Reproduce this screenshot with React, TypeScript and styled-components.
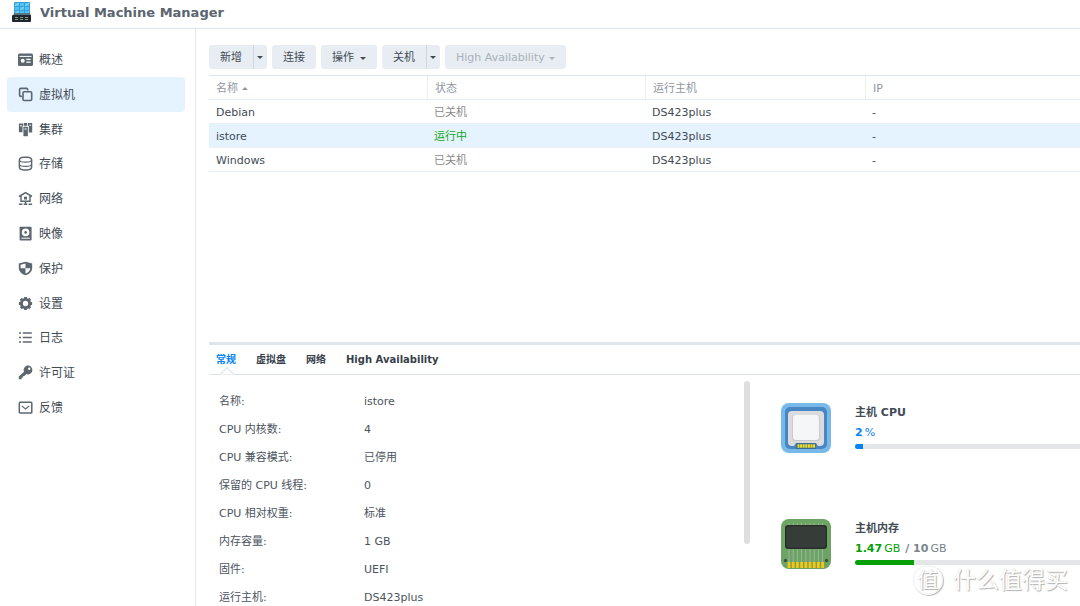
import React from "react";
import styled, { createGlobalStyle, css } from "styled-components";

const sans = `"DejaVu Sans", "Noto Sans CJK SC", sans-serif`;

const GlobalStyle = createGlobalStyle`
  * { box-sizing: border-box; }
  html, body, #root { height: 100%; }
  body {
    margin: 0;
    overflow: hidden;
    background: #fff;
    color: #4b545e;
    font: 11px/16px ${sans};
  }
  button { font: inherit; color: inherit; }
`;

const Window = styled.div`
  position: relative;
  display: flex;
  flex-direction: column;
  height: 100vh;
  overflow: hidden;
`;

const TitleBar = styled.header`
  display: flex;
  align-items: center;
  gap: 8px;
  height: 29px;
  flex: none;
  padding: 0 12px 4px;
  border-bottom: 1px solid #e1e6ec;
`;

const Title = styled.h1`
  margin: 0;
  padding-top: 2px;
  font-size: 13px;
  line-height: 20px;
  font-weight: 700;
  color: #5b656f;
`;

const Body = styled.div`
  display: flex;
  flex: 1;
  min-height: 0;
`;

const Sidebar = styled.nav`
  flex: none;
  width: 196px;
  padding: 13px 10px 0 7px;
  border-right: 1px solid #e4e9ef;
`;

const NavList = styled.ul`
  display: grid;
  grid-auto-rows: 1fr;
  height: 383px;
  margin: 0;
  padding: 0;
  list-style: none;
`;

const NavLink = styled.a<{ $active?: boolean }>`
  display: flex;
  align-items: center;
  gap: 6px;
  height: 100%;
  padding: 0 11px;
  border-radius: 4px;
  font-size: 12px;
  color: #414b55;
  text-decoration: none;
  background: ${(p) => (p.$active ? "#e5f2ff" : "transparent")};
`;

const NavIcon = styled.svg`
  width: 15px;
  height: 15px;
  flex: none;
  color: #5d6770;
`;

const NavLabel = styled.span`
  padding-top: 1px;
`;

const Main = styled.main`
  display: flex;
  flex-direction: column;
  flex: 1;
  min-width: 0;
  padding-left: 13px;
`;

const Upper = styled.section`
  flex: 1;
  min-height: 0;
`;

const Toolbar = styled.div`
  display: flex;
  gap: 5px;
  padding: 16px 0 6px;
`;

const SplitButton = styled.div`
  display: flex;
`;

const Button = styled.button<{ $part?: "start" | "end" }>`
  display: flex;
  align-items: center;
  gap: 6px;
  height: 24px;
  padding: 2px 11px 0;
  border: 0;
  border-radius: 3px;
  background: #e8edf3;
  color: #414b55;
  &:disabled {
    gap: 4px;
    color: #a9b1ba;
  }
  ${(p) =>
    p.$part === "start" &&
    css`
      border-radius: 3px 0 0 3px;
    `}
  ${(p) =>
    p.$part === "end" &&
    css`
      padding: 0 4px 0 3px;
      border-left: 1px solid #cdd5de;
      border-radius: 0 3px 3px 0;
    `}
`;

const Caret = styled.span<{ $up?: boolean }>`
  display: inline-block;
  border: 3px solid transparent;
  border-top: ${(p) => (p.$up ? "0" : "3px solid currentColor")};
  border-bottom: ${(p) => (p.$up ? "3px solid currentColor" : "0")};
  vertical-align: middle;
`;

const Table = styled.table`
  width: 100%;
  table-layout: fixed;
  border-collapse: separate;
  border-spacing: 0;
  border-top: 1px solid #dde5ed;
`;

const Col = styled.col<{ $width?: number }>`
  width: ${(p) => (p.$width ? `${p.$width}px` : "auto")};
`;

const HeadCell = styled.th`
  height: 24px;
  padding: 2px 7px 0;
  border-bottom: 1px solid #e8edf2;
  text-align: left;
  font-weight: 400;
  color: #8f979f;
  & + & {
    border-left: 1px solid #e8f0f5;
  }
`;

const Row = styled.tr<{ $selected?: boolean }>`
  background: ${(p) => (p.$selected ? "#e5f2ff" : "transparent")};
`;

const Cell = styled.td<{ $tone?: "muted" | "running" }>`
  height: 24px;
  padding: 2px 7px 0;
  border-bottom: 1px solid #ebf0f5;
  color: ${(p) => (p.$tone === "running" ? "#14a821" : p.$tone === "muted" ? "#8a8a8a" : "#414b55")};
`;

const Details = styled.section`
  display: flex;
  flex-direction: column;
  flex: none;
  height: 264px;
  border-top: 3px solid #dfe6ed;
`;

const TabBar = styled.div`
  display: flex;
  flex: none;
  gap: 20px;
  height: 30px;
  padding: 0 7px;
  border-bottom: 1px solid #d9e3ea;
`;

const Tab = styled.button<{ $active?: boolean }>`
  position: relative;
  height: 29px;
  padding: 1px 0 0;
  border: 0;
  background: none;
  font-size: 10px;
  font-weight: 700;
  color: ${(p) => (p.$active ? "#0582f5" : "#36404a")};
  ${(p) =>
    p.$active &&
    css`
      &::after {
        content: "";
        position: absolute;
        left: calc(50% - 4px);
        bottom: -5px;
        width: 8px;
        height: 8px;
        border: 1px solid #d9e3ea;
        border-right-color: transparent;
        border-bottom-color: transparent;
        background: linear-gradient(135deg, #fff 50%, transparent 50%);
        transform: rotate(45deg);
      }
    `}
`;

const Panel = styled.div`
  display: flex;
  flex: 1;
  min-height: 0;
`;

const Properties = styled.dl`
  display: grid;
  grid-template-columns: 145px 1fr;
  grid-auto-rows: 28px;
  align-items: center;
  flex: 1;
  margin: 0;
  padding: 13px 10px 0;
  overflow: hidden;
`;

const Term = styled.dt`
  margin: 0;
`;

const Value = styled.dd`
  margin: 0;
`;

const ScrollTrack = styled.div`
  flex: none;
  width: 6px;
  padding-top: 6px;
`;

const ScrollThumb = styled.div`
  height: 163px;
  border-radius: 3px;
  background: #dedede;
`;

const Usage = styled.div`
  display: flex;
  flex-direction: column;
  flex: none;
  gap: 66px;
  width: 330px;
  padding: 28px 0 0 31px;
  overflow: hidden;
`;

const UsageItem = styled.div`
  display: flex;
  gap: 24px;
  height: 50px;
`;

const UsageIcon = styled.svg`
  width: 50px;
  height: 50px;
  flex: none;
`;

const UsageText = styled.div`
  flex: none;
  width: 400px;
`;

const UsageTitle = styled.h2`
  margin: 0;
  padding: 1px 0 3px;
  font-size: 11px;
  line-height: 18px;
  font-weight: 700;
  color: #414b55;
`;

const Reading = styled.div<{ $tone: string }>`
  display: flex;
  gap: 2px;
  line-height: 16px;
  color: ${(p) => p.$tone};
`;

const Limit = styled.span`
  display: flex;
  gap: 2px;
  padding-left: 3px;
  color: #7b848d;
`;

const Meter = styled.div`
  height: 5px;
  margin-top: 3px;
  border-radius: 3px;
  overflow: hidden;
  background: #e4e6e8;
`;

const MeterFill = styled.div<{ $tone: string }>`
  height: 100%;
  background: ${(p) => p.$tone};
`;

const Watermark = styled.div`
  position: absolute;
  right: 12px;
  bottom: 10px;
  display: flex;
  align-items: center;
  gap: 10px;
  font-size: 23px;
  line-height: 32px;
  color: #fff;
  text-shadow: 1px 1px 1px #b0b0b0, 0 0 1px #d0d0d0;
  pointer-events: none;
`;

const Seal = styled.span`
  display: grid;
  place-items: center;
  width: 30px;
  height: 30px;
  border: 1px solid #f0f0f0;
  border-radius: 50%;
  background: rgba(255, 255, 255, 0.5);
  box-shadow: 1px 1px 1px #b8b8b8;
  font-size: 21px;
  line-height: 24px;
`;

const AppLogo = () => (
  <svg width="20" height="20" viewBox="0 0 20 20" aria-hidden="true">
    <rect x="2" y="0" width="16" height="14" rx="1" fill="#3a9bd6" />
    <path d="M3 1h4v3H3zM8 1h4v3H8zM13 1h4v3h-4zM3 5h4v3H3zM8 5h4v3H8zM13 5h4v3h-4zM3 9h4v3H3zM8 9h4v3H8zM13 9h4v3h-4z" fill="#4fc3f2" />
    <path d="M3 4l4-3M8 8l4-3M13 4l4-3M3 12l4-3" stroke="#a5ebff" strokeWidth=".7" />
    <path d="M2 11h16l1 3H1z" fill="#5c7384" />
    <rect x="0" y="13" width="19" height="7" rx="1" fill="#22272e" />
    <path d="M3 15h3v1H3zM8 15h3v1H8zM13 15h3v1h-3zM3 17h3v1H3zM8 17h3v1H8zM13 17h3v1h-3z" fill="#7f9a84" />
  </svg>
);

const icons: Record<string, React.ReactNode> = {
  overview: (
    <>
      <rect x="0" y="1.500" width="15" height="12.500" rx="1.500" fill="currentColor" />
      <path d="M1.500 4.400h12" stroke="#fff" strokeWidth="1" />
      <circle cx="4.700" cy="8.700" r="2" fill="#fff" />
      <path d="M8.300 7.300h4.300M8.300 10.100h4.300" stroke="#fff" strokeWidth="1.300" />
    </>
  ),
  vm: (
    <g fill="none" stroke="currentColor" strokeWidth="1.6">
      <path d="M3.900 9.400H2.800A1.200 1.200 0 0 1 1.600 8.200V2.600a1.200 1.200 0 0 1 1.200-1.200h5.700a1.200 1.200 0 0 1 1.200 1.200v1" />
      <rect x="5" y="4.700" width="8.700" height="8.800" rx="1.200" />
    </g>
  ),
  cluster: (
    <g fill="currentColor">
      <path d="M.900 1.500h4.400v2.400h-.8v6.300H.900zM10 1h4.200v9.500h-3.400V4H10z" />
      <rect x="5.400" y="4.800" width="4.500" height="9.400" rx=".4" />
      <path d="M2 3.800h2M11.300 3.200h1.800M6.500 7h2.200" stroke="#fff" strokeWidth="1" />
      <path d="M6 1h3.200v2.800H6z" />
    </g>
  ),
  storage: (
    <g fill="none" stroke="currentColor" strokeWidth="1.5">
      <rect x="1.400" y="1.300" width="12.200" height="12.600" rx="4.500" ry="2.800" />
      <path d="M1.400 4c0 1.400 2.600 2.100 6.100 2.100s6.100-.7 6.100-2.100M1.400 8.200c0 1.400 2.600 2.100 6.100 2.100s6.100-.7 6.100-2.100" strokeWidth="1.200" />
    </g>
  ),
  network: (
    <g fill="none" stroke="currentColor" strokeWidth="1.5">
      <path d="M1 5.500 7.500 1.600 14 5.500M3 5v5.300h9V5" />
      <rect x="6" y="5.700" width="3" height="2.800" fill="currentColor" stroke="none" />
      <path d="M7.500 10v3M.900 13.300h3.500M5.700 13.300h3.600M10.600 13.300h3.500" />
    </g>
  ),
  image: (
    <>
      <rect x="1.600" y=".8" width="12" height="13.600" rx=".8" fill="currentColor" />
      <circle cx="7.600" cy="6.400" r="3.800" fill="#fff" />
      <circle cx="7.600" cy="6.400" r="1.300" fill="currentColor" />
      <path d="M3.400 12.200h8.400" stroke="#fff" strokeWidth="1" />
    </>
  ),
  protection: (
    <>
      <path d="M7.500.7 14.200 2.500v4.400c0 3.600-3 6.100-6.700 7.400C3.800 13 .800 10.500.800 6.900V2.500z" fill="currentColor" />
      <path d="M7.500 2.500V7.200H2.600V3.800zM7.500 7.200h4.800c-.2 2.400-2 4.300-4.800 5.400z" fill="#fff" />
    </>
  ),
  settings: (
    <g fill="none" stroke="currentColor">
      <circle cx="7.500" cy="7.500" r="4.100" strokeWidth="2.900" />
      <path d="M7.500.900v2M7.500 12.100v2M.900 7.500h2M12.100 7.500h2M2.800 2.800 4 4M11 11l1.200 1.200M2.800 12.200 4 11M11 4l1.200-1.200" strokeWidth="2.800" />
    </g>
  ),
  log: (
    <path d="M1 3h2M4.800 3h9M1 7.500h2M4.800 7.500h9M1 12h2M4.800 12h9" stroke="currentColor" strokeWidth="1.700" />
  ),
  license: (
    <>
      <circle cx="10" cy="5" r="4.400" fill="currentColor" />
      <path d="m7.500 5.600 2.200 2.200-3.600 3.500H4.800v1.400H3.600v1.500H.800v-2.700z" fill="currentColor" />
      <circle cx="11.200" cy="3.800" r="1.200" fill="#fff" />
    </>
  ),
  feedback: (
    <g fill="none" stroke="currentColor" strokeWidth="1.500">
      <rect x="1.300" y="2.300" width="12.500" height="10.700" rx=".8" />
      <path d="m3.800 5.900 3.700 3 3.700-3" strokeWidth="1.200" />
    </g>
  ),
};

const navItems = [
  { id: "overview", label: "概述" },
  { id: "vm", label: "虚拟机" },
  { id: "cluster", label: "集群" },
  { id: "storage", label: "存储" },
  { id: "network", label: "网络" },
  { id: "image", label: "映像" },
  { id: "protection", label: "保护" },
  { id: "settings", label: "设置" },
  { id: "log", label: "日志" },
  { id: "license", label: "许可证" },
  { id: "feedback", label: "反馈" },
];

const machines = [
  { name: "Debian", running: false },
  { name: "istore", running: true },
  { name: "Windows", running: false },
];

const tabs = ["常规", "虚拟盘", "网络", "High Availability"];

const properties = [
  ["名称:", "istore"],
  ["CPU 内核数:", "4"],
  ["CPU 兼容模式:", "已停用"],
  ["保留的 CPU 线程:", "0"],
  ["CPU 相对权重:", "标准"],
  ["内存容量:", "1 GB"],
  ["固件:", "UEFI"],
  ["运行主机:", "DS423plus"],
];

const CpuIcon = () => (
  <UsageIcon viewBox="0 0 50 50" aria-hidden="true">
    <rect width="50" height="50" rx="8" fill="#77b9e8" />
    <rect x="4" y="4" width="42" height="42" rx="5" fill="#4987c4" />
    <path d="M11 8h28a4 4 0 0 1 4 4v27a4 4 0 0 1-4 4h-2l-2-3H15l-2 3h-2a4 4 0 0 1-4-4V12a4 4 0 0 1 4-4z" fill="#dcdcde" />
    <rect x="11" y="12" width="28" height="26" rx="3" fill="#c9cacd" />
    <rect x="12" y="12" width="26" height="25" rx="3" fill="#f5f6f8" />
    <rect x="15" y="40" width="20" height="6" rx="1" fill="#3b6f94" />
    <path d="M16.500 43h18" stroke="#f4df21" strokeWidth="3.500" strokeDasharray="2 .600" />
  </UsageIcon>
);

const pins = Array.from({ length: 9 }, (_, i) => 8 + i * 4.2);

const MemoryIcon = () => (
  <UsageIcon viewBox="0 0 50 50" aria-hidden="true">
    <rect width="50" height="50" rx="8" fill="#6ba463" />
    {pins.map((x) => (
      <g key={x}>
        <path d={`M${x} 4v40`} stroke="#a3b5a6" strokeWidth=".9" />
        <rect x={x - 1.4} y="43" width="2.800" height="6" fill="#fac510" />
      </g>
    ))}
    <rect x="4" y="6" width="42" height="24" rx="3" fill="#292e2a" />
    <rect x="5.500" y="7.500" width="39" height="21" rx="2" fill="#363c38" />
    <circle cx="4.500" cy="41.500" r="1.700" fill="#36523a" />
    <circle cx="45.500" cy="41.500" r="1.700" fill="#36523a" />
  </UsageIcon>
);

export default function App() {
  return (
    <Window>
      <GlobalStyle />
      <TitleBar>
        <AppLogo />
        <Title>Virtual Machine Manager</Title>
      </TitleBar>
      <Body>
        <Sidebar>
          <NavList>
            {navItems.map((item) => (
              <li key={item.id}>
                <NavLink href={`#${item.id}`} $active={item.id === "vm"}>
                  <NavIcon viewBox="0 0 15 15" aria-hidden="true">
                    {icons[item.id]}
                  </NavIcon>
                  <NavLabel>{item.label}</NavLabel>
                </NavLink>
              </li>
            ))}
          </NavList>
        </Sidebar>
        <Main>
          <Upper>
            <Toolbar>
              <SplitButton>
                <Button $part="start">新增</Button>
                <Button $part="end" aria-label="新增选项">
                  <Caret />
                </Button>
              </SplitButton>
              <Button>连接</Button>
              <Button>
                操作
                <Caret />
              </Button>
              <SplitButton>
                <Button $part="start">关机</Button>
                <Button $part="end" aria-label="关机选项">
                  <Caret />
                </Button>
              </SplitButton>
              <Button disabled>
                High Availability
                <Caret />
              </Button>
            </Toolbar>
            <Table>
              <colgroup>
                <Col $width={218} />
                <Col $width={218} />
                <Col $width={220} />
                <Col />
              </colgroup>
              <thead>
                <tr>
                  <HeadCell>
                    名称 <Caret $up />
                  </HeadCell>
                  <HeadCell>状态</HeadCell>
                  <HeadCell>运行主机</HeadCell>
                  <HeadCell>IP</HeadCell>
                </tr>
              </thead>
              <tbody>
                {machines.map((vm) => (
                  <Row key={vm.name} $selected={vm.running}>
                    <Cell>{vm.name}</Cell>
                    <Cell $tone={vm.running ? "running" : "muted"}>{vm.running ? "运行中" : "已关机"}</Cell>
                    <Cell>DS423plus</Cell>
                    <Cell>-</Cell>
                  </Row>
                ))}
              </tbody>
            </Table>
          </Upper>
          <Details>
            <TabBar role="tablist">
              {tabs.map((tab, i) => (
                <Tab key={tab} role="tab" aria-selected={i === 0} $active={i === 0}>
                  {tab}
                </Tab>
              ))}
            </TabBar>
            <Panel>
              <Properties>
                {properties.map(([term, value]) => (
                  <React.Fragment key={term}>
                    <Term>{term}</Term>
                    <Value>{value}</Value>
                  </React.Fragment>
                ))}
              </Properties>
              <ScrollTrack>
                <ScrollThumb />
              </ScrollTrack>
              <Usage>
                <UsageItem>
                  <CpuIcon />
                  <UsageText>
                    <UsageTitle>主机 CPU</UsageTitle>
                    <Reading $tone="#0582f5">
                      <b>2</b>%
                    </Reading>
                    <Meter role="progressbar" aria-label="主机 CPU" aria-valuenow={2}>
                      <MeterFill $tone="#0582f5" style={{ width: "2%" }} />
                    </Meter>
                  </UsageText>
                </UsageItem>
                <UsageItem>
                  <MemoryIcon />
                  <UsageText>
                    <UsageTitle>主机内存</UsageTitle>
                    <Reading $tone="#06a006">
                      <b>1.47</b>GB
                      <Limit>
                        <b>/ 10</b>GB
                      </Limit>
                    </Reading>
                    <Meter role="progressbar" aria-label="主机内存" aria-valuenow={14.7}>
                      <MeterFill $tone="#06a006" style={{ width: "14.7%" }} />
                    </Meter>
                  </UsageText>
                </UsageItem>
              </Usage>
            </Panel>
          </Details>
        </Main>
      </Body>
      <Watermark>
        <Seal>值</Seal>
        什么值得买
      </Watermark>
    </Window>
  );
}
